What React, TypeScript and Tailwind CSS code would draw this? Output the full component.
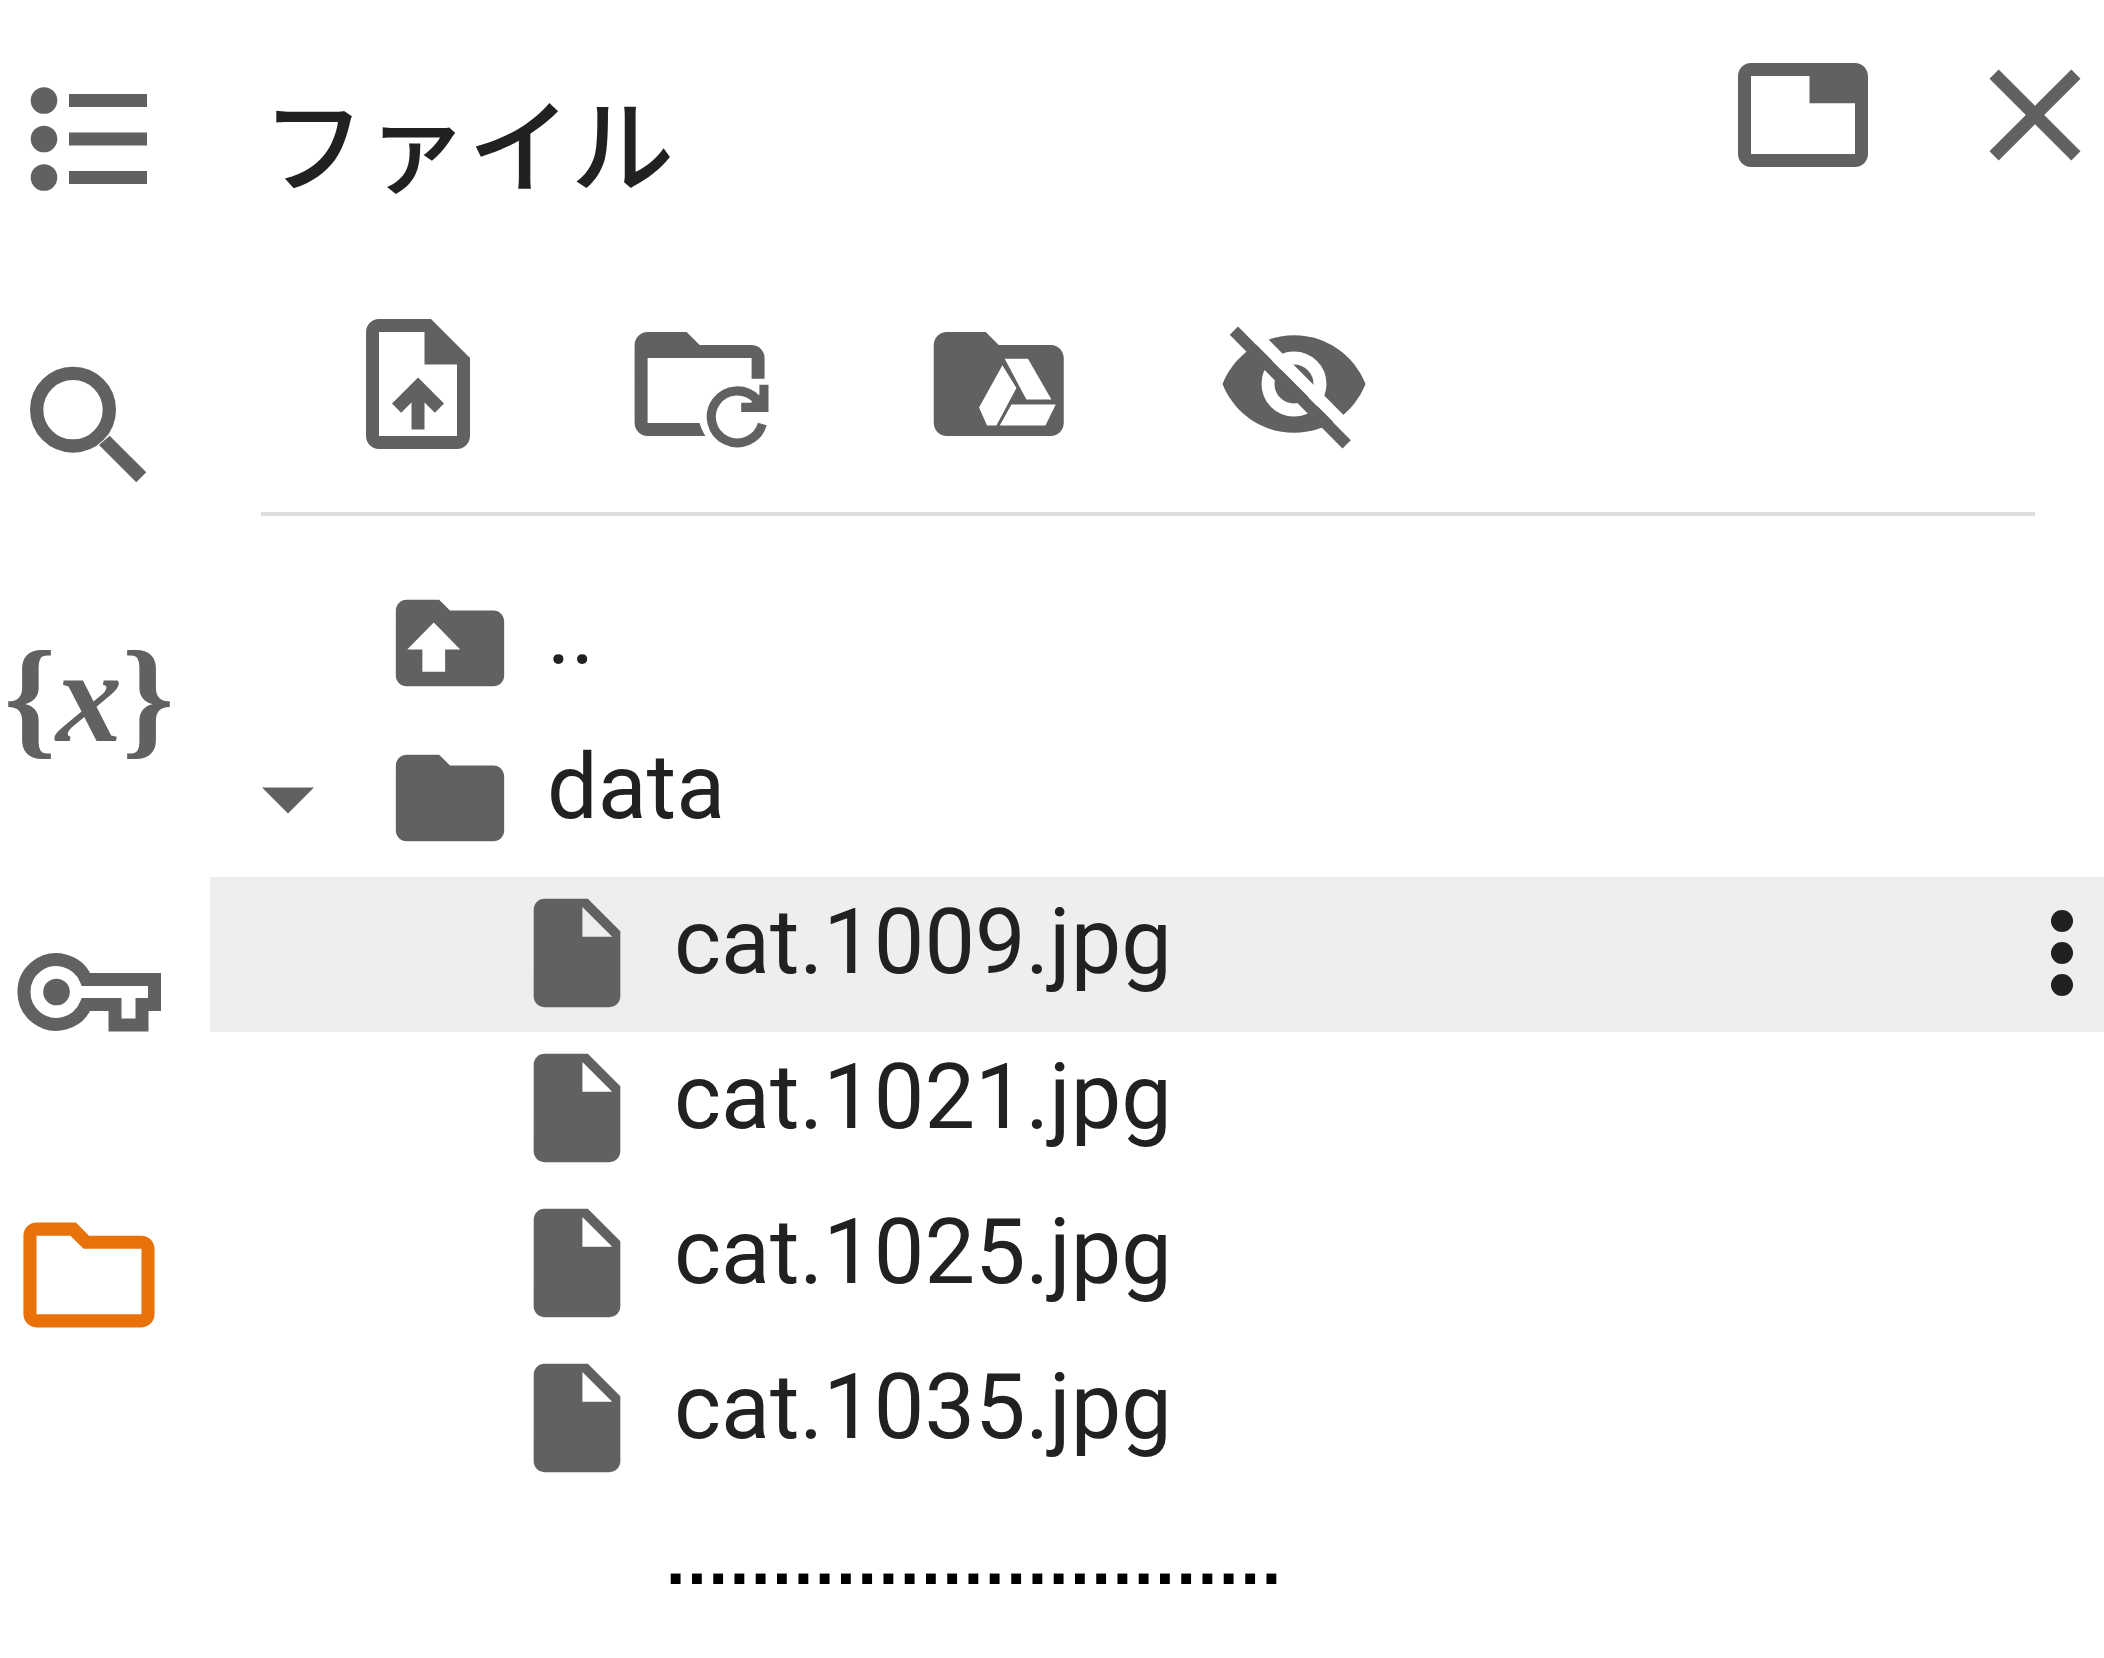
import type { ReactNode } from "react";

const FOLDER =
  "M10 4H4c-1.1 0-2 .9-2 2v12c0 1.1.9 2 2 2h16c1.1 0 2-.9 2-2V8c0-1.1-.9-2-2-2h-8l-2-2z";

function ListIcon() {
  return (
    <svg className="size-40" viewBox="0 0 160 160" fill="currentColor" aria-hidden="true">
      <circle cx="35" cy="41.500" r="13.300" />
      <circle cx="35" cy="80" r="13.300" />
      <circle cx="35" cy="118.500" r="13.300" />
      <path d="M60 35h78v13H60zM60 73.500h78v13H60zM60 112h78v13H60z" />
    </svg>
  );
}

function SearchIcon() {
  return (
    <svg className="size-40" viewBox="-0.100 -0.500 24 24" fill="currentColor" aria-hidden="true">
      <circle cx="9.500" cy="9.500" r="5.450" fill="none" stroke="currentColor" strokeWidth="2" />
      <path d="M15 13.400L20.490 18.900 18.990 20.400 13.400 14.800z" />
    </svg>
  );
}

function KeyIcon() {
  return (
    <svg className="size-40" viewBox="0 -1 160 160" aria-hidden="true">
      <g fill="none" stroke="currentColor" strokeWidth="13">
        <path d="M77 67.500H145.500V92.500H133V113H106V92.500H77A32.300 32.300 0 1 1 77 67.500Z" />
      </g>
      <circle cx="47.500" cy="80" r="13.300" fill="currentColor" />
    </svg>
  );
}

function FolderOutlineIcon() {
  return (
    <svg className="size-40" viewBox="-0.200 -0.200 24.400 24.400" fill="currentColor" aria-hidden="true">
      <path d="M20 6h-8l-2-2H4c-1.100 0-2 .9-2 2v12c0 1.100.9 2 2 2h16c1.100 0 2-.9 2-2V8c0-1.100-.9-2-2-2zm0 12H4V6h5.170l2 2H20v10z" />
    </svg>
  );
}

function VariablesIcon() {
  return (
    <span className="flex h-40 w-40 items-center justify-center pb-5 font-['Liberation_Serif',serif] text-[132px] leading-none font-bold whitespace-nowrap">
      {"{"}
      <i>x</i>
      {"}"}
    </span>
  );
}

function FileIcon() {
  return (
    <svg className="size-[130px] shrink-0" viewBox="0 0 24 24" fill="currentColor" aria-hidden="true">
      <path d="M6 2c-1.100 0-1.990.9-1.990 2L4 20c0 1.100.89 2 1.990 2H18c1.100 0 2-.9 2-2V8l-6-6H6zm7 7V3.500L18.500 9H13z" />
    </svg>
  );
}

function FolderIcon({ up = false }: { up?: boolean }) {
  return (
    <svg className="size-[130px] shrink-0" viewBox="0 0 24 24" fill="currentColor" aria-hidden="true">
      <path d={FOLDER} />
      {up && <path fill="#fff" d="M9 8.200l4.900 5H11.100v4.100H6.900v-4.100H4.100z" />}
    </svg>
  );
}

const sideItems: { label: string; icon: ReactNode; active?: boolean }[] = [
  { label: "目次", icon: <ListIcon /> },
  { label: "検索", icon: <SearchIcon /> },
  { label: "変数", icon: <VariablesIcon /> },
  { label: "シークレット", icon: <KeyIcon /> },
  { label: "ファイル", icon: <FolderOutlineIcon />, active: true },
];

const tools: { label: string; icon: ReactNode }[] = [
  {
    label: "アップロード",
    icon: (
      <svg className="size-[156px]" viewBox="0 0 24 24" fill="currentColor" aria-hidden="true">
        <path d="M14 2H6c-1.100 0-1.990.9-1.990 2L4 20c0 1.100.89 2 1.990 2H18c1.100 0 2-.9 2-2V8l-6-6zm4 18H6V4h7v5h5v11zM8 15.010l1.410 1.410L11 14.840V19h2v-4.160l1.590 1.590L16 15.010 12.010 11 8 15.010z" />
      </svg>
    ),
  },
  {
    label: "更新",
    icon: (
      <svg className="size-[156px]" viewBox="1.600 0 24 24" fill="currentColor" aria-hidden="true">
        <path d="M10 4H4c-1.100 0-2 .9-2 2v12c0 1.100.9 2 2 2h8.900c-.4-.6-.7-1.300-.9-2H4V8h16v3.200h2V8c0-1.100-.9-2-2-2h-8z" />
        <path d="M21.650 18.150A4 4 0 1 1 20.700 14.300" fill="none" stroke="currentColor" strokeWidth="1.400" />
        <path d="M22.600 12.100v4.200h-4.200v-1.400h1.500l1.300-1.300v-1.500z" />
      </svg>
    ),
  },
  {
    label: "ドライブをマウント",
    icon: (
      <svg className="size-[156px]" viewBox="0.500 0 24 24" fill="currentColor" aria-hidden="true">
        <path d={FOLDER} />
        <path
          fill="#fff"
          d="M12.560 9.120l2.160 3.480-3.080 5.800H10.200l-1.230-2.800zM12.920 8.100h3.580l3.600 6.300h-3.840zM13.950 15.170h6.820l-1.590 3.230h-7.030z"
        />
      </svg>
    ),
  },
  {
    label: "隠しファイルを表示",
    icon: (
      <svg className="size-[156px]" viewBox="0 0 24 24" fill="currentColor" aria-hidden="true">
        <path d="M12 4.500C7 4.500 2.730 7.610 1 12c1.730 4.390 6 7.500 11 7.500s9.270-3.110 11-7.500c-1.730-4.390-6-7.500-11-7.500z" />
        <circle cx="12" cy="12" r="4" fill="none" stroke="#fff" strokeWidth="2" />
        <path d="M3 1.400L22.500 21" stroke="#fff" strokeWidth="1.900" />
        <path d="M2.750 3.800L20.100 21.300" stroke="currentColor" strokeWidth="1.800" />
      </svg>
    ),
  },
];

const files = ["cat.1009.jpg", "cat.1021.jpg", "cat.1025.jpg", "cat.1035.jpg"];

function Label({ children }: { children: string }) {
  return <span className="ml-8 pb-5 text-[90px] leading-[108px] text-[#212121]">{children}</span>;
}

export default function App() {
  return (
    <div className="flex min-h-screen bg-white font-[Roboto,'Noto_Sans_CJK_JP',sans-serif] text-[#616161]">
      <nav className="flex w-[210px] shrink-0 flex-col gap-[124px] pt-[59px] pl-[9px]" aria-label="サイドバー">
        {sideItems.map((item) => (
          <button
            key={item.label}
            type="button"
            aria-label={item.label}
            className={item.active ? "size-40 text-[#e8710a]" : "size-40"}
          >
            {item.icon}
          </button>
        ))}
      </nav>

      <main className="min-w-0 flex-1">
        <header className="flex items-start pt-[37px] pr-[17px] pl-[52px]">
          <h1 className="mt-[49px] flex-1 text-[103px] leading-[128px] font-medium text-[#212121]">ファイル</h1>
          <button type="button" aria-label="タブで開く" className="mr-[102px]">
            <svg className="size-[156px]" viewBox="0 0 24 24" fill="currentColor" aria-hidden="true">
              <path d="M20 4H4c-1.100 0-2 .9-2 2v12c0 1.100.9 2 2 2h16c1.100 0 2-.9 2-2V6c0-1.100-.9-2-2-2zm0 14H4V6h9v4.200h7z" />
            </svg>
          </button>
          <button type="button" aria-label="閉じる">
            <svg className="h-[156px] w-[104px]" viewBox="4 0 16 24" fill="currentColor" aria-hidden="true">
              <path d="M19 6.410L17.590 5 12 10.590 6.410 5 5 6.410 10.590 12 5 17.590 6.410 19 12 13.410 17.590 19 19 17.590 13.410 12z" />
            </svg>
          </button>
        </header>

        <div className="mr-[69px] ml-[51px] flex gap-[136px] border-b-4 border-[#dddddd] pt-[92px] pb-[50px] pl-[79px]">
          {tools.map((tool) => (
            <button key={tool.label} type="button" aria-label={tool.label}>
              {tool.icon}
            </button>
          ))}
        </div>

        <ul className="mt-[51px]">
          <li className="flex h-[155px] items-center pb-1 pl-[175px]">
            <FolderIcon up />
            <Label>..</Label>
          </li>
          <li>
            <div className="flex h-[155px] items-center pb-1 pl-[52px]">
              <button type="button" aria-label="data を折りたたむ" aria-expanded="true" className="mr-[71px]">
                <svg className="size-[52px]" viewBox="0 0 10 10" fill="currentColor" aria-hidden="true">
                  <path d="M0 3h10L5 8z" />
                </svg>
              </button>
              <FolderIcon />
              <Label>data</Label>
            </div>
            <ul>
              {files.map((name, i) => (
                <li
                  key={name}
                  className={
                    i === 0
                      ? "flex h-[155px] items-center bg-[#eeeeee] pb-1 pl-[302px]"
                      : "flex h-[155px] items-center pb-1 pl-[302px]"
                  }
                >
                  <FileIcon />
                  <Label>{name}</Label>
                  {i === 0 && (
                    <button type="button" aria-label="ファイルの操作" className="ml-auto text-[#212121]">
                      <svg className="h-[130px] w-[84px]" viewBox="0 0 84 130" fill="currentColor" aria-hidden="true">
                        <circle cx="42" cy="33" r="11" />
                        <circle cx="42" cy="65" r="11" />
                        <circle cx="42" cy="97" r="11" />
                      </svg>
                    </button>
                  )}
                </li>
              ))}
            </ul>
          </li>
        </ul>

        <p className="mt-7 pl-[455px] font-['DejaVu_Sans',sans-serif] text-[56px] leading-[80px] font-bold text-black">
          .............................
        </p>
      </main>
    </div>
  );
}
